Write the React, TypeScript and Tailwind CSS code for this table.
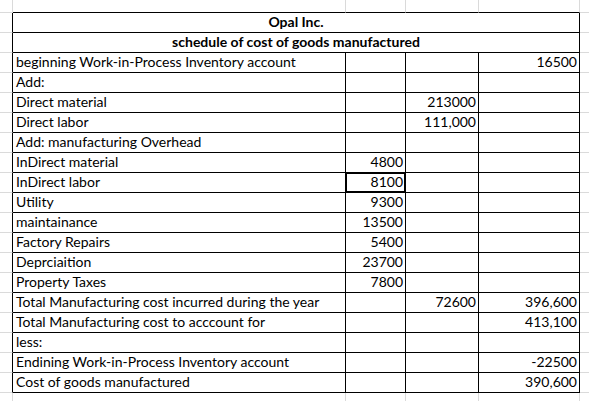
import React from "react";

const rows: [string, string, string, string][] = [
  ["beginning Work-in-Process Inventory account", "", "", "16500"],
  ["Add:", "", "", ""],
  ["Direct material", "", "213000", ""],
  ["Direct labor", "", "111,000", ""],
  ["Add: manufacturing Overhead", "", "", ""],
  ["InDirect material", "4800", "", ""],
  ["InDirect labor", "8100", "", ""],
  ["Utility", "9300", "", ""],
  ["maintainance", "13500", "", ""],
  ["Factory Repairs", "5400", "", ""],
  ["Deprciaition", "23700", "", ""],
  ["Property Taxes", "7800", "", ""],
  ["Total Manufacturing cost incurred during the year", "", "72600", "396,600"],
  ["Total Manufacturing cost to acccount for", "", "", "413,100"],
  ["less:", "", "", ""],
  ["Endining Work-in-Process Inventory account", "", "", "-22500"],
  ["Cost of goods manufactured", "", "", "390,600"],
];

const NR = 21; // grid rows 0..20
const NC = 6; // grid cols 0..5

function inside(r: number, c: number) {
  return r >= 1 && r <= 19 && c >= 1 && c <= 4;
}

export default function App() {
  const cells: React.ReactNode[] = [];
  for (let r = 0; r < NR; r++) {
    for (let c = 0; c < NC; c++) {
      const isTitle = r === 1 || r === 2;
      if (isTitle && c >= 2 && c <= 4) continue;
      const span = isTitle && c === 1;
      const rBlack = span ? true : inside(r, c) || inside(r, c + 1);
      const bBlack = inside(r, c) || inside(r + 1, c);
      const rCls = c === NC - 1 ? "" : rBlack ? "border-r border-r-black" : "border-r border-r-[#dadada]";
      const bCls = r === NR - 1 ? "" : bBlack ? "border-b border-b-black" : "border-b border-b-[#dadada]";
      let content: React.ReactNode = null;
      let align = "justify-start pl-[3px]";
      let extra = "";
      if (span) {
        content = r === 1 ? "Opal Inc." : "schedule of cost of goods manufactured";
        align = "col-span-4 justify-center font-bold";
      } else if (r >= 3 && r <= 19 && c >= 1 && c <= 4) {
        const row = rows[r - 3];
        content = row[c - 1];
        if (c > 1) align = "justify-end pr-[2px]";
        if (r === 9 && c === 2) extra = "shadow-[inset_1px_1px_0_#000,inset_-1px_-1px_0_#000,-1px_0_0_#000,0_-1px_0_#000]";
      }
      cells.push(
        <div
          key={`${r}-${c}`}
          className={`flex items-end overflow-visible whitespace-nowrap pb-[3px] leading-none ${rCls} ${bCls} ${align} ${extra}`}
        >
          {content}
        </div>
      );
    }
  }
  return (
    <div className="w-[589px] h-[401px] overflow-hidden bg-white text-black text-[14px] font-['Lato','Open_Sans',sans-serif] grid grid-cols-[13px_333px_60px_73px_101px_1fr] grid-rows-[13px_repeat(19,20px)_1fr]">
      {cells}
    </div>
  );
}
